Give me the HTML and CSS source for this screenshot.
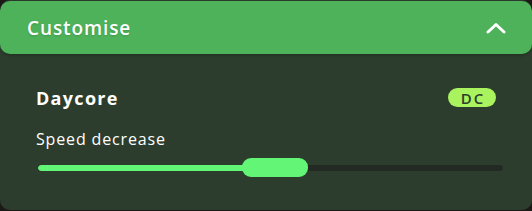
FILE: index.html
```html
<!DOCTYPE html>
<html>
<head>
<meta charset="utf-8">
<link rel="stylesheet" href="styles.css">
</head>
<body>
<div class="panel">
  <div class="header">
    <span class="title">Customise</span>
    <svg class="chevron" width="20" height="12" viewBox="0 0 20 12"><path d="M2 10 L10 2.5 L18 10" fill="none" stroke="#fff" stroke-width="3" stroke-linecap="round" stroke-linejoin="round"/></svg>
  </div>
  <div class="body">
    <div class="mod-row">
      <span class="mod-name">Daycore</span>
      <span class="badge">DC</span>
    </div>
    <div class="label">Speed decrease</div>
    <div class="slider">
      <div class="track">
        <div class="fill" style="width: 48%"></div>
      </div>
      <div class="thumb"></div>
    </div>
  </div>
</div>
</body>
</html>
```
FILE: styles.css
```css
html, body {
  margin: 0;
  padding: 0;
  background: #1c1a17;
}
body {
  width: 532px;
  height: 211px;
  font-family: "Open Sans", Lato, sans-serif;
}
.panel {
  width: 532px;
  height: 210px;
  border-radius: 10px;
  overflow: hidden;
  box-sizing: border-box;
  padding-top: 1px;
  display: flex;
  flex-direction: column;
  background: linear-gradient(#2b3a2c 0 1px, #2c3d2d 1px);
}
.header {
  height: 53px;
  background: #4db25a;
  border-radius: 10px;
  display: flex;
  align-items: center;
  justify-content: space-between;
  padding: 0 26px 0 27px;
  box-shadow: 0 2px 3px rgba(0,0,0,0.18);
  flex-shrink: 0;
}
.title {
  color: #fff;
  font-size: 19px;
  font-weight: 600;
  letter-spacing: 0.9px;
  text-shadow: 0 1px 2px rgba(0,0,0,0.15);
}
.chevron {
  display: block;
  margin-top: 1px;
}
.body {
  padding: 34px 36px 0 36px;
}
.mod-row {
  display: flex;
  justify-content: space-between;
  align-items: center;
  height: 19px;
}
.mod-name {
  color: #fff;
  font-size: 18px;
  font-weight: 700;
  letter-spacing: 1.3px;
}
.badge {
  width: 48px;
  height: 19px;
  border-radius: 10px;
  background: #a9f35f;
  color: #2c3d2d;
  font-size: 15px;
  font-weight: 600;
  letter-spacing: 2px;
  text-indent: 2px;
  display: flex;
  align-items: center;
  justify-content: center;
}
.label {
  margin-top: 23px;
  color: #fff;
  font-size: 16px;
  font-weight: 400;
  letter-spacing: 0.85px;
  line-height: 19px;
}
.slider {
  position: relative;
  margin-top: 9px;
  height: 19px;
  margin-left: 2px;
  margin-right: -7px;
}
.track {
  position: absolute;
  left: 0;
  right: 0;
  top: 7px;
  height: 6px;
  border-radius: 3px;
  background: #222a23;
  overflow: hidden;
}
.fill {
  height: 100%;
  background: #63f575;
  border-radius: 3px;
}
.thumb {
  position: absolute;
  left: 204px;
  top: 0;
  width: 66px;
  height: 19px;
  border-radius: 9px;
  background: #63f575;
}
```
